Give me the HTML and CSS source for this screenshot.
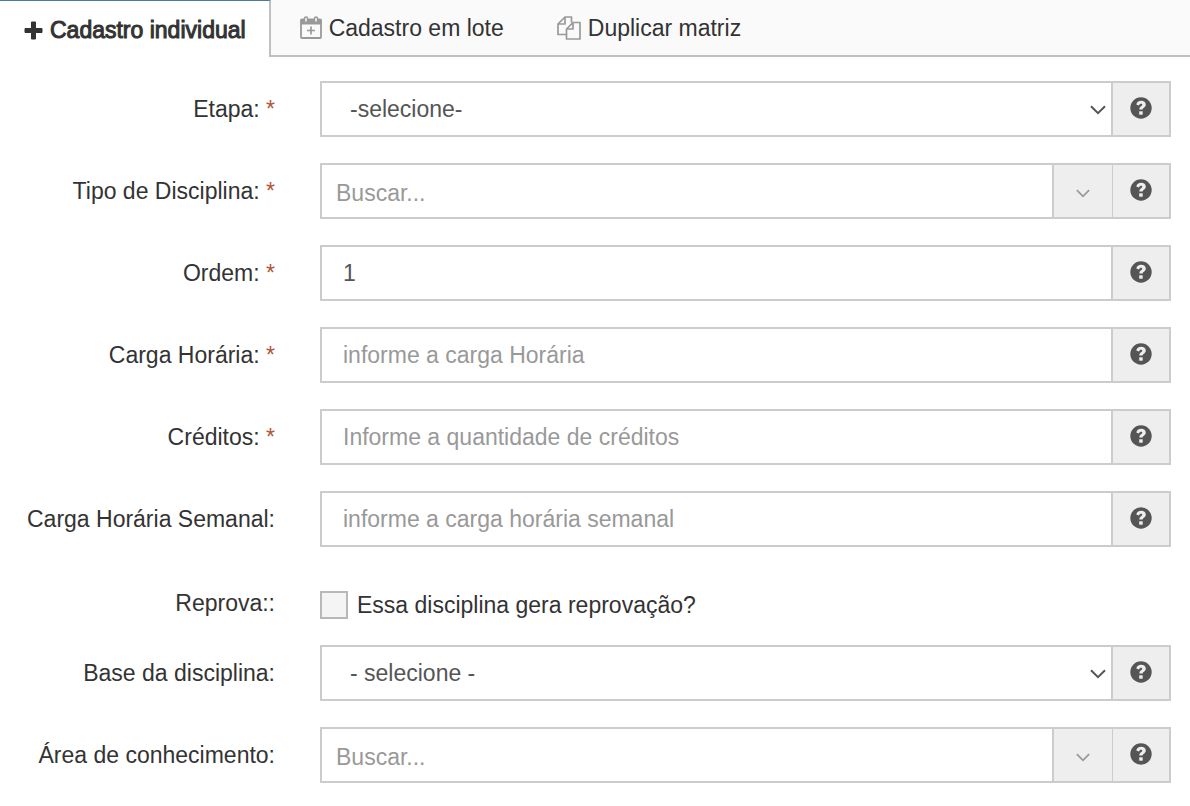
FILE: index.html
```
<!DOCTYPE html>
<html lang="pt-br">
<head>
    <meta charset="UTF-8">
    <meta name="viewport" content="width=device-width, initial-scale=1.0">
    <title>Cadastro de disciplina</title>
    <link rel="stylesheet" href="styles.css">
</head>
<body>
    <!-- icons shared by the rows -->
    <svg class="sprite" aria-hidden="true">
        <symbol id="help" viewBox="0 0 22 22">
            <circle cx="11" cy="11" r="10.7" fill="#555"/>
            <path d="M6.300 7.500C6.900 5 8.600 3.800 11.100 3.800c2.800 0 4.700 1.500 4.700 3.700 0 1.800-1 2.600-2.100 3.400-.8.500-1.100.9-1.100 1.700H9.300c0-1.900.8-2.700 1.800-3.400.8-.5 1.200-.8 1.200-1.400 0-.7-.5-1.100-1.300-1.100-.9 0-1.500.6-2.100 1.800z" fill="#eee"/>
            <path d="M9.200 14.300h3.500v3.400H9.200z" fill="#eee"/>
        </symbol>
        <symbol id="chevron" viewBox="0 0 16 10">
            <path d="M1 1.2l7 7 7-7" fill="none" stroke="currentColor" stroke-width="2"/>
        </symbol>
    </svg>

    <nav class="tabs">
        <a href="#individual" class="tab active">
            <svg width="19" height="19" viewBox="0 0 19 19"><path d="M7.500 1h4v6.500H18v4h-6.500V18h-4v-6.500H1v-4h6.500z" fill="#333" stroke="#333" stroke-linejoin="round"/></svg>
            <span>Cadastro individual</span>
        </a>
        <a href="#lote" class="tab">
            <svg width="22" height="23" viewBox="0 0 22 23" fill="none" stroke="#999">
                <path d="M1 3.500h20V8H1z" fill="#999"/>
                <rect x="1" y="3.500" width="20" height="18.500" rx="1" stroke-width="1.800"/>
                <rect x="4.500" y="1" width="3" height="5.500" rx="1.500" fill="#fafafa" stroke-width="1.500"/>
                <rect x="14.500" y="1" width="3" height="5.500" rx="1.500" fill="#fafafa" stroke-width="1.500"/>
                <path d="M11 10.500v8M7 14.500h8" stroke-width="1.700"/>
            </svg>
            <span>Cadastro em lote</span>
        </a>
        <a href="#duplicar" class="tab">
            <svg width="24" height="24" viewBox="0 0 24 24" fill="none" stroke="#999" stroke-width="1.700" stroke-linejoin="round">
                <path d="M9 18.500H1V8l7-7h6.500v5.500M8 1v7H1"/>
                <path d="M16 6.500h7V23H9.500V13zM16 6.500V13H9.500" fill="#fafafa"/>
            </svg>
            <span>Duplicar matriz</span>
        </a>
    </nav>

    <form class="form">
        <div class="row">
            <label for="etapa">Etapa: <span class="req">*</span></label>
            <div class="group">
                <div class="select">
                    <select id="etapa"><option>-selecione-</option></select>
                    <svg><use href="#chevron"/></svg>
                </div>
                <button type="button" class="help" aria-label="Ajuda"><svg><use href="#help"/></svg></button>
            </div>
        </div>
        <div class="row">
            <label for="tipo">Tipo de Disciplina: <span class="req">*</span></label>
            <div class="group">
                <input type="text" id="tipo" class="search" placeholder="Buscar...">
                <button type="button" class="toggle" aria-label="Abrir"><svg><use href="#chevron"/></svg></button>
                <button type="button" class="help" aria-label="Ajuda"><svg><use href="#help"/></svg></button>
            </div>
        </div>
        <div class="row">
            <label for="ordem">Ordem: <span class="req">*</span></label>
            <div class="group">
                <input type="text" id="ordem" value="1">
                <button type="button" class="help" aria-label="Ajuda"><svg><use href="#help"/></svg></button>
            </div>
        </div>
        <div class="row">
            <label for="carga">Carga Horária: <span class="req">*</span></label>
            <div class="group">
                <input type="text" id="carga" placeholder="informe a carga Horária">
                <button type="button" class="help" aria-label="Ajuda"><svg><use href="#help"/></svg></button>
            </div>
        </div>
        <div class="row">
            <label for="creditos">Créditos: <span class="req">*</span></label>
            <div class="group">
                <input type="text" id="creditos" placeholder="Informe a quantidade de créditos">
                <button type="button" class="help" aria-label="Ajuda"><svg><use href="#help"/></svg></button>
            </div>
        </div>
        <div class="row">
            <label for="semanal">Carga Horária Semanal:</label>
            <div class="group">
                <input type="text" id="semanal" placeholder="informe a carga horária semanal">
                <button type="button" class="help" aria-label="Ajuda"><svg><use href="#help"/></svg></button>
            </div>
        </div>
        <div class="row row-check">
            <label for="reprova">Reprova::</label>
            <div class="check">
                <input type="checkbox" id="reprova">
                <label for="reprova">Essa disciplina gera reprovação?</label>
            </div>
        </div>
        <div class="row">
            <label for="base">Base da disciplina:</label>
            <div class="group">
                <div class="select">
                    <select id="base"><option>- selecione -</option></select>
                    <svg><use href="#chevron"/></svg>
                </div>
                <button type="button" class="help" aria-label="Ajuda"><svg><use href="#help"/></svg></button>
            </div>
        </div>
        <div class="row">
            <label for="area">Área de conhecimento:</label>
            <div class="group">
                <input type="text" id="area" class="search" placeholder="Buscar...">
                <button type="button" class="toggle" aria-label="Abrir"><svg><use href="#chevron"/></svg></button>
                <button type="button" class="help" aria-label="Ajuda"><svg><use href="#help"/></svg></button>
            </div>
        </div>
    </form>
</body>
</html>
```
FILE: styles.css
```
* {
    box-sizing: border-box;
}

body {
    margin: 0;
    background: #fff;
    color: #333;
    font: 23px/28px "Liberation Sans", Arial, sans-serif;
}

input,
select,
button {
    margin: 0;
    border: 0;
    border-radius: 0;
    font: inherit;
    outline: 0;
}

.sprite {
    display: none;
}

/* tabs */
.tabs {
    display: flex;
    height: 57px;
    background: #fafafa;
}

.tab {
    display: flex;
    align-items: center;
    gap: 7px;
    padding: 0 24px 0 29px;
    border-bottom: 2px solid #c0c0c0;
    color: #333;
    text-decoration: none;
}

.tabs::after {
    content: '';
    flex: 1;
    border-bottom: 2px solid #c0c0c0;
}

.tab.active {
    padding: 2px 23px 0 24px;
    background: #fff;
    border-top: 1px solid #4c7a9c;
    border-right: 2px solid #c0c0c0;
    border-bottom: 0;
    -webkit-text-stroke: 1px #333;
}

/* form */
.form {
    padding: 24px 19px 24px 0;
}

.row {
    display: grid;
    grid-template-columns: 275px 1fr;
    column-gap: 45px;
    align-items: center;
    margin-bottom: 26px;
}

.row > label {
    text-align: right;
}

.req {
    color: #b0553a;
}

.group {
    display: flex;
    height: 56px;
    border: 2px solid #ccc;
}

.group input,
.group select {
    flex: 1;
    min-width: 0;
    padding: 0 21px;
    background: #fff;
    color: #555;
}

.group input::placeholder {
    color: #999;
    opacity: 1;
}

.group .search {
    padding: 4px 14px 0;
}

.select {
    position: relative;
    display: flex;
    flex: 1;
}

.group select {
    appearance: none;
    padding: 0 28px;
}

.select svg {
    position: absolute;
    top: 22px;
    right: 5px;
    width: 16px;
    height: 10px;
    color: #555;
    pointer-events: none;
}

.help,
.toggle {
    display: flex;
    align-items: center;
    justify-content: center;
    width: 58px;
    padding: 0 0 2px;
    background: #eee;
    border-left: 2px solid #ccc;
    cursor: pointer;
}

.help svg {
    width: 22px;
    height: 22px;
}

.toggle {
    width: 60px;
    padding: 4px 0 0;
    color: #999;
}

.toggle + .help {
    width: 57px;
    border-left-width: 1px;
}

.toggle svg {
    width: 14px;
    height: 9px;
}

.row-check {
    height: 46px;
    align-items: start;
    padding-top: 16px;
}

.check {
    display: flex;
    align-items: center;
    gap: 9px;
    padding-top: 2px;
}

.check input {
    appearance: none;
    width: 28px;
    height: 28px;
    background: #f4f4f4;
    border: 2px solid #b8b8b8;
}
```
